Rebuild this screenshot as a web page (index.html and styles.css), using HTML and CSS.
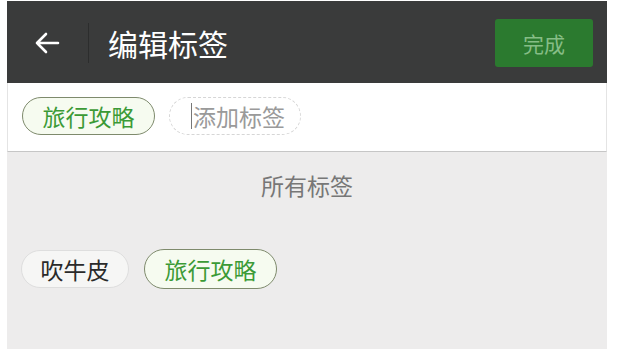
FILE: index.html
```html
<!DOCTYPE html>
<html lang="zh">
<head>
<meta charset="utf-8">
<title>编辑标签</title>
<link rel="stylesheet" href="styles.css">
</head>
<body>
<div class="app">
  <header class="topbar">
    <span class="back">
      <svg width="26" height="22" viewBox="0 0 26 22"><path d="M24 11H3M12 2L3 11L12 20" fill="none" stroke="#fff" stroke-width="2.6" stroke-linecap="round" stroke-linejoin="round"/></svg>
    </span>
    <span class="divider"></span>
    <h1 class="title">编辑标签</h1>
    <button class="done">完成</button>
  </header>
  <section class="editor">
    <span class="tag tag-selected">旅行攻略</span>
    <span class="tag tag-input"><span class="caret"></span>添加标签</span>
  </section>
  <section class="all">
    <div class="all-title">所有标签</div>
    <div class="tag-list">
      <span class="tag tag-plain">吹牛皮</span>
      <span class="tag tag-selected">旅行攻略</span>
    </div>
  </section>
</div>
</body>
</html>
```

FILE: styles.css
```css
html, body {
  margin: 0;
  padding: 0;
  background: #fff;
}
body {
  font-family: "Noto Sans CJK SC", "Noto Sans", sans-serif;
}
.app {
  margin: 1px 0 0 7px;
  width: 600px;
  height: 348px;
  display: flex;
  flex-direction: column;
  background: #edecec;
}
.topbar {
  height: 82px;
  flex: none;
  background: #3a3b3b;
  display: flex;
  align-items: center;
  padding: 0 14px 0 27px;
  box-sizing: border-box;
}
.back {
  width: 26px;
  height: 22px;
  display: flex;
  margin-top: 2px;
}
.divider {
  width: 1px;
  height: 40px;
  background: #2c2d2d;
  margin-left: 28px;
  margin-top: 2px;
}
.title {
  margin: 0 0 0 19px;
  font-size: 30px;
  font-weight: 400;
  color: #fff;
  line-height: 1;
  flex: 1;
  margin-top: 1px;
}
.done {
  width: 98px;
  height: 48px;
  border: none;
  border-radius: 3px;
  background: #2b7a2f;
  color: #86bd86;
  font-family: inherit;
  font-size: 21px;
  padding: 0;
  margin-top: 2px;
}
.editor {
  height: 69px;
  flex: none;
  box-sizing: border-box;
  background: #fff;
  border-bottom: 1px solid #c6c6c6;
  border-left: 1px solid #e4e4e4;
  border-right: 1px solid #e4e4e4;
  display: flex;
  align-items: center;
  gap: 14px;
  padding: 0 0 2px 14px;
}
.tag {
  height: 38px;
  box-sizing: border-box;
  border-radius: 19px;
  display: inline-flex;
  align-items: center;
  padding: 0;
  font-size: 23px;
  line-height: 1;
}
.tag-selected {
  background: #f6fbf0;
  border: 1px solid #7e8a6c;
  color: #3b9a36;
  width: 133px;
  justify-content: center;
}
.tag-input {
  width: 132px;
  border: 1px dashed #d6d6d6;
  color: #9a9a9a;
  position: relative;
  justify-content: center;
  padding: 0 0 0 6px;
}
.caret {
  width: 1px;
  height: 26px;
  background: #777;
  margin-right: 1px;
}
.all {
  flex: 1;
  display: flex;
  flex-direction: column;
}
.all-title {
  text-align: center;
  font-size: 23px;
  color: #777;
  line-height: 1;
  padding-top: 22px;
}
.tag-list {
  display: flex;
  gap: 15px;
  padding: 52px 0 0 14px;
}
.tag-list .tag-selected {
  height: 40px;
  border-radius: 20px;
}
.tag-plain {
  width: 108px;
  justify-content: center;
  background: #f6f6f5;
  border: 1px solid #dedede;
  color: #2a2a2a;
  margin-top: 1px;
}
```
